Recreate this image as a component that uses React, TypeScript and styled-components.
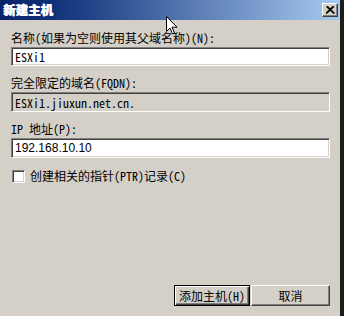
import React from "react";
import styled, { createGlobalStyle } from "styled-components";

const Global = createGlobalStyle`
  html, body { margin: 0; padding: 0; background: #1c1c1c; }
  body { width: 344px; height: 316px; overflow: hidden; }
`;

const FONT = `"Noto Sans Mono CJK SC", "Noto Sans CJK SC", "Liberation Mono", monospace`;

const Dialog = styled.div`
  position: relative;
  width: 340px;
  height: 316px;
  background: #d4d0c8;
  display: flex;
  flex-direction: column;
  font-family: ${FONT};
  font-size: 12px;
  color: #000;
`;

const TitleBar = styled.div`
  height: 20px;
  display: flex;
  align-items: center;
  justify-content: space-between;
  padding: 0 2px 0 3px;
  background: linear-gradient(to right, #0a246a 0%, #0f2f78 15%, #a6caf0 100%);
`;

const Title = styled.span`
  color: #fff;
  font-family: "Noto Sans CJK SC", sans-serif;
  font-weight: 900;
  font-size: 12.5px;
  line-height: 20px;
  text-shadow: 0.6px 0 0 #fff;
`;

const CloseBtn = styled.div`
  width: 16px;
  height: 14px;
  box-sizing: border-box;
  background: #d4d0c8;
  border-top: 1px solid #fff;
  border-left: 1px solid #fff;
  border-right: 1px solid #404040;
  border-bottom: 1px solid #404040;
  box-shadow: inset -1px -1px 0 #808080;
  display: flex;
  align-items: center;
  justify-content: center;
`;

const Body = styled.div`
  flex: 1;
  display: flex;
  flex-direction: column;
  padding: 11px 10px 10px 11px;
`;

const Label = styled.div`
  line-height: 14px;
  height: 14px;
  margin-bottom: 2px;
  white-space: nowrap;
`;

const Field = styled.div<{ $disabled?: boolean; $h?: number }>`
  box-sizing: border-box;
  height: ${(p) => p.$h ?? 20}px;
  background: ${(p) => (p.$disabled ? "#d4d0c8" : "#fff")};
  border-top: 1px solid #808080;
  border-left: 1px solid #808080;
  border-right: 1px solid #fff;
  border-bottom: 1px solid #fff;
  box-shadow: inset 1px 1px 0 #404040, inset -1px -1px 0 #d4d0c8;
  padding: 0 3px;
  display: flex;
  align-items: center;
  margin-bottom: 10px;
  white-space: nowrap;
`;

const IpText = styled.span`
  font-family: "Liberation Sans", Arial, sans-serif;
  font-size: 12px;
`;

const CheckRow = styled.div`
  display: flex;
  align-items: center;
  gap: 5px;
  margin-top: 1px;
  padding-left: 1px;
  line-height: 14px;
`;

const CheckBox = styled.div`
  width: 13px;
  height: 13px;
  box-sizing: border-box;
  background: #fff;
  border-top: 1px solid #808080;
  border-left: 1px solid #808080;
  border-right: 1px solid #fff;
  border-bottom: 1px solid #fff;
  box-shadow: inset 1px 1px 0 #404040, inset -1px -1px 0 #d4d0c8;
`;

const Buttons = styled.div`
  margin-top: auto;
  display: flex;
  justify-content: flex-end;
  gap: 1px;
`;

const Button = styled.div<{ $default?: boolean; $w: number }>`
  width: ${(p) => p.$w}px;
  height: 21px;
  box-sizing: border-box;
  background: #d4d0c8;
  display: flex;
  align-items: center;
  justify-content: center;
  line-height: 14px;
  white-space: nowrap;
  border: 1px solid ${(p) => (p.$default ? "#000" : "transparent")};
  box-shadow: ${(p) =>
    p.$default
      ? "inset 1px 1px 0 #fff, inset -1px -1px 0 #404040, inset -2px -2px 0 #808080"
      : "inset 0 0 0 0 transparent"};
  ${(p) =>
    !p.$default &&
    `border-top-color:#fff;border-left-color:#fff;border-right-color:#404040;border-bottom-color:#404040;box-shadow: inset -1px -1px 0 #808080;`}
`;

const Cursor = styled.svg`
  position: absolute;
  left: 166px;
  top: 16px;
`;

export default function App() {
  return (
    <>
      <Global />
      <Dialog>
        <TitleBar>
          <Title>新建主机</Title>
          <CloseBtn>
            <svg width="9" height="8" viewBox="0 0 9 8">
              <path d="M0.5 0.5 L8 7.5 M1.5 0.5 L8.5 7.5 M8 0.5 L0.5 7.5 M7 0.5 L-0.5 7.5" stroke="#000" strokeWidth="1.2" />
            </svg>
          </CloseBtn>
        </TitleBar>
        <Body>
          <Label>名称(如果为空则使用其父域名称)(N):</Label>
          <Field $h={19}>ESXi1</Field>
          <Label>完全限定的域名(FQDN):</Label>
          <Field $disabled>ESXi1.jiuxun.net.cn.</Field>
          <Label>IP 地址(P):</Label>
          <Field>
            <IpText>192.168.10.10</IpText>
          </Field>
          <CheckRow>
            <CheckBox />
            <span>创建相关的指针(PTR)记录(C)</span>
          </CheckRow>
          <Buttons>
            <Button $default $w={76}>添加主机(H)</Button>
            <Button $w={79}>取消</Button>
          </Buttons>
        </Body>
        <Cursor width="13" height="20" viewBox="0 0 13 20">
          <path d="M0.5 0.5 L0.5 15.5 L4 12 L6.5 18 L8.5 17 L6 11.2 L11 11.2 Z" fill="#fff" stroke="#000" strokeWidth="1" />
        </Cursor>
      </Dialog>
    </>
  );
}
